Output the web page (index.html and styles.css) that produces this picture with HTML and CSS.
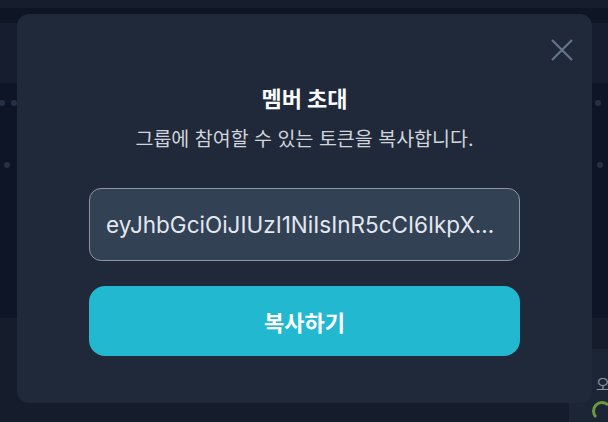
FILE: index.html
```html
<!DOCTYPE html>
<html lang="ko">
<head>
    <meta charset="UTF-8">
    <meta name="viewport" content="width=device-width, initial-scale=1.0">
    <title>멤버 초대</title>
    <link rel="stylesheet" href="styles.css">
</head>
<body>
    <div class="page">
        <div class="topbar"></div>
        <div class="nav"></div>
        <div class="header"></div>
        <div class="main">
            <div class="dots-row row-a">
                <div class="dots"><span class="dot"></span><span class="dot"></span></div>
                <div class="dots"><span class="dot"></span></div>
            </div>
            <div class="dots-row row-b">
                <div class="dots"><span class="dot"></span></div>
                <div class="dots"><span class="dot"></span><span class="dot"></span></div>
            </div>
        </div>
        <div class="footer">
            <div class="side-panel">
                <span class="side-label">오</span>
                <span class="side-ring"></span>
            </div>
        </div>
    </div>

    <div class="overlay">
        <div class="modal">
            <button class="close" aria-label="닫기">
                <svg width="24" height="24" viewBox="0 0 24 24" fill="none" stroke="currentColor" stroke-width="2.2">
                    <path d="M2 2L22 22M22 2L2 22"/>
                </svg>
            </button>
            <h2 class="modal-title">멤버 초대</h2>
            <p class="modal-desc">그룹에 참여할 수 있는 토큰을 복사합니다.</p>
            <input class="token" type="text" readonly value="eyJhbGciOiJIUzI1NiIsInR5cCI6IkpX...">
            <button class="copy">복사하기</button>
        </div>
    </div>
</body>
</html>
```

FILE: styles.css
```css
body {
    margin: 0;
    font-family: Inter, "Noto Sans CJK KR", sans-serif;
    background-color: #151c2c;
    overflow: hidden;
}
.page {
    display: flex;
    flex-direction: column;
    height: 422px;
}
.topbar { height: 8px; background: #161d2d; }
.nav { height: 15px; background: #0e1626; }
.header { height: 60px; background: #151d2f; }
.main {
    height: 235px;
    background: #0d1527;
    display: flex;
    flex-direction: column;
}
.dots-row {
    display: flex;
    justify-content: space-between;
}
.row-a { margin-top: 17px; padding: 0 7px 0 0; margin-left: -1px; }
.row-b { margin-top: 56px; padding: 0 5px 0 4px; }
.dots {
    display: flex;
    gap: 6px;
}
.dot {
    width: 6px;
    height: 6px;
    border-radius: 50%;
    background: #263044;
}
.footer {
    flex: 1;
    background: #151c2c;
    display: flex;
    justify-content: flex-end;
}
.side-panel {
    width: 39px;
    margin-top: 31px;
    background: #1c2535;
    display: flex;
    flex-direction: column;
    align-items: flex-end;
}
.side-label {
    margin-top: 26px;
    width: 12px;
    overflow: hidden;
    font-size: 15px;
    line-height: 20px;
    color: #8a94a4;
}
.side-ring {
    margin-top: 6px;
    width: 14px;
    height: 14px;
    margin-right: -4px;
    border: 3px solid #6a9a3a;
    border-right-color: transparent;
    border-bottom-color: transparent;
    border-radius: 50%;
}

.overlay {
    position: fixed;
    inset: 0;
    display: flex;
    justify-content: center;
    align-items: flex-start;
    padding-top: 14px;
}
.modal {
    position: relative;
    width: 575px;
    margin-left: 1px;
    box-sizing: border-box;
    padding: 71px 72px 47px;
    background: #1f293a;
    border-radius: 12px;
    display: flex;
    flex-direction: column;
    align-items: center;
}
.close {
    position: absolute;
    top: 24px;
    right: 18px;
    padding: 0;
    border: none;
    background: none;
    color: #64748b;
    cursor: pointer;
    line-height: 0;
}
.modal-title {
    margin: 0;
    font-size: 22px;
    line-height: 28px;
    font-weight: 700;
    color: #f8fafc;
}
.modal-desc {
    margin: 12px 0 0;
    font-size: 19.5px;
    line-height: 28px;
    color: #d1d5db;
}
.token {
    margin-top: 35px;
    width: 100%;
    height: 73px;
    box-sizing: border-box;
    padding: 0 16px;
    background: #334155;
    border: 1px solid #8b95a6;
    border-radius: 12px;
    font-family: Inter, sans-serif;
    font-size: 22.5px;
    color: #e2e8f0;
    outline: none;
    text-overflow: ellipsis;
}
.copy {
    margin-top: 25px;
    width: 100%;
    height: 70px;
    border: none;
    border-radius: 16px;
    background: #22b8d0;
    color: #ffffff;
    font-family: Inter, "Noto Sans CJK KR", sans-serif;
    font-size: 22px;
    font-weight: 700;
    cursor: pointer;
}
```
